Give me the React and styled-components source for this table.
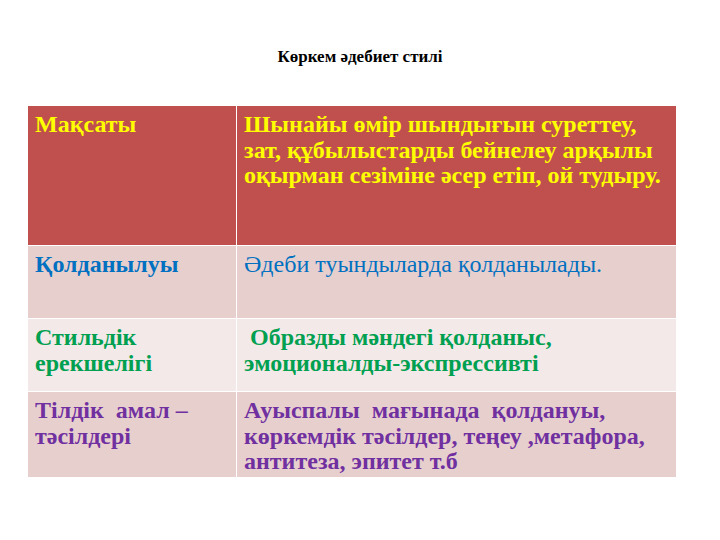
import React from "react";
import styled, { createGlobalStyle } from "styled-components";

const Global = createGlobalStyle`
  html, body { margin: 0; padding: 0; background: #ffffff; }
  body { font-family: "Liberation Serif", "Times New Roman", serif; }
`;

const Page = styled.div`
  width: 720px;
  height: 540px;
  box-sizing: border-box;
  padding: 46px 44px 0 28px;
  display: flex;
  flex-direction: column;
  align-items: stretch;
`;

const Title = styled.h1`
  margin: 0;
  padding-left: 16px;
  height: 22px;
  font-family: "Liberation Serif", "Times New Roman", serif;
  font-size: 17px;
  line-height: 22px;
  font-weight: bold;
  text-align: center;
  color: #000;
`;

const Table = styled.div`
  margin-top: 38px;
  display: grid;
  grid-template-columns: 208px 1fr;
  grid-template-rows: 139px 72px 72px 85px;
  gap: 1px;
  background: #ffffff;
`;

const Cell = styled.div`
  background: ${(p) => p.$bg};
  color: ${(p) => p.$color};
  font-family: "Liberation Serif", "Times New Roman", serif;
  font-weight: ${(p) => (p.$bold ? "bold" : "normal")};
  font-size: 24px;
  line-height: 25.5px;
  padding: 6px 7px 0 7px;
  white-space: pre-wrap;
  box-sizing: border-box;
`;

const rows = [
  {
    bg: "#C0504D",
    color: "#FFFF00",
    a: "Мақсаты",
    b: "Шынайы өмір шындығын суреттеу, зат, құбылыстарды бейнелеу арқылы оқырман сезіміне әсер етіп, ой тудыру.",
    boldA: true,
    boldB: true,
  },
  {
    bg: "#E7CFCE",
    color: "#0070C0",
    a: "Қолданылуы",
    b: "Әдеби туындыларда қолданылады.",
    boldA: true,
    boldB: false,
  },
  {
    bg: "#F3E9E9",
    color: "#00A050",
    a: "Стильдік ерекшелігі",
    b: " Образды мәндегі қолданыс, эмоционалды-экспрессивті",
    boldA: true,
    boldB: true,
  },
  {
    bg: "#E7CFCE",
    color: "#7030A0",
    a: "Тілдік  амал – тәсілдері",
    b: "Ауыспалы  мағынада  қолдануы, көркемдік тәсілдер, теңеу ,метафора, антитеза, эпитет т.б",
    boldA: true,
    boldB: true,
  },
];

export default function App() {
  return (
    <>
      <Global />
      <Page>
        <Title>Көркем әдебиет стилі</Title>
        <Table>
          {rows.map((r, i) => (
            <React.Fragment key={i}>
              <Cell $bg={r.bg} $color={r.color} $bold={r.boldA}>{r.a}</Cell>
              <Cell $bg={r.bg} $color={r.color} $bold={r.boldB}>{r.b}</Cell>
            </React.Fragment>
          ))}
        </Table>
      </Page>
    </>
  );
}
